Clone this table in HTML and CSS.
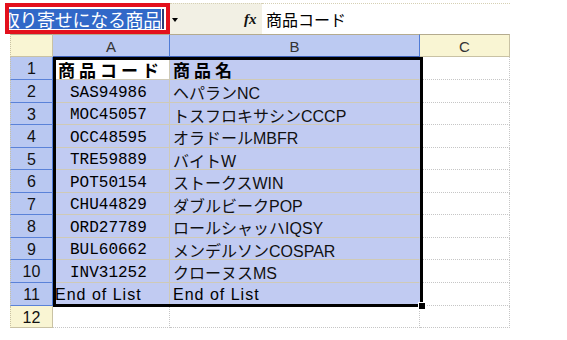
FILE: index.html
```html
<!DOCTYPE html>
<html lang="ja">
<head>
<meta charset="utf-8">
<link rel="stylesheet" href="styles.css">
</head>
<body>
<div class="toolbar">
  <div class="namebox"><span class="nb-text">取り寄せになる商品</span><span class="caret"></span></div>
  <div class="mid">
    <span class="arrow"></span>
    <span class="fx">fx</span>
  </div>
  <div class="formula">商品コード</div>
</div>
<div class="sheet">
  <div class="corner"></div>
  <div class="ch selh">A</div>
  <div class="ch selh">B</div>
  <div class="ch">C</div>

  <div class="rh selr">1</div>
  <div class="cell a active bold">商品コード</div>
  <div class="cell b sel bold">商品名</div>
  <div class="cell c"></div>

  <div class="rh selr">2</div>
  <div class="cell a sel code">SAS94986</div>
  <div class="cell b sel">ヘパランNC</div>
  <div class="cell c"></div>

  <div class="rh selr">3</div>
  <div class="cell a sel code">MOC45057</div>
  <div class="cell b sel">トスフロキサシンCCCP</div>
  <div class="cell c"></div>

  <div class="rh selr">4</div>
  <div class="cell a sel code">OCC48595</div>
  <div class="cell b sel">オラドールMBFR</div>
  <div class="cell c"></div>

  <div class="rh selr">5</div>
  <div class="cell a sel code">TRE59889</div>
  <div class="cell b sel">バイトW</div>
  <div class="cell c"></div>

  <div class="rh selr">6</div>
  <div class="cell a sel code">POT50154</div>
  <div class="cell b sel">ストークスWIN</div>
  <div class="cell c"></div>

  <div class="rh selr">7</div>
  <div class="cell a sel code">CHU44829</div>
  <div class="cell b sel">ダブルビークPOP</div>
  <div class="cell c"></div>

  <div class="rh selr">8</div>
  <div class="cell a sel code">ORD27789</div>
  <div class="cell b sel">ロールシャッハIQSY</div>
  <div class="cell c"></div>

  <div class="rh selr">9</div>
  <div class="cell a sel code">BUL60662</div>
  <div class="cell b sel">メンデルソンCOSPAR</div>
  <div class="cell c"></div>

  <div class="rh selr">10</div>
  <div class="cell a sel code">INV31252</div>
  <div class="cell b sel">クローヌスMS</div>
  <div class="cell c"></div>

  <div class="rh selr">11</div>
  <div class="cell a sel eol">End of List</div>
  <div class="cell b sel eol">End of List</div>
  <div class="cell c"></div>

  <div class="rh">12</div>
  <div class="cell a"></div>
  <div class="cell b"></div>
  <div class="cell c"></div>

  <div class="selection"><span class="handle"></span></div>
</div>
</body>
</html>
```
FILE: styles.css
```css
* { box-sizing: border-box; }
body {
  margin: 0;
  background: #ffffff;
  font-family: "Liberation Sans", "Noto Sans CJK JP", sans-serif;
  width: 567px;
  height: 340px;
  overflow: hidden;
}
.toolbar {
  display: flex;
  width: 510px;
  height: 34px;
}
.namebox {
  margin: 3px 0 0 5px;
  width: 165px;
  height: 31px;
  border: 4px solid #e3101c;
  background: #ffffff;
  display: flex;
  align-items: center;
  justify-content: flex-end;
  overflow: hidden;
  padding: 0 2px 0 0;
}
.nb-text {
  flex: none;
  background: #3168c8;
  color: #ffffff;
  font-family: "Noto Sans CJK JP", sans-serif;
  font-size: 18px;
  line-height: 20px;
  height: 20px;
  white-space: nowrap;
  letter-spacing: -0.3px;
}
.caret {
  flex: none;
  width: 2px;
  height: 20px;
  background: #2a3d78;
  margin-left: 1px;
}
.mid {
  margin-top: 3px;
  width: 92px;
  background: #f2f0e4;
  display: flex;
  align-items: center;
  border-top: 1px dotted #d6d0b4;
  padding-top: 1px;
}
.arrow {
  width: 0;
  height: 0;
  border-left: 3.5px solid transparent;
  border-right: 3.5px solid transparent;
  border-top: 4px solid #000;
  margin-left: 2px;
}
.fx {
  font-family: "Liberation Serif", serif;
  font-style: italic;
  font-weight: bold;
  font-size: 15px;
  margin-left: 66px;
  color: #111;
}
.formula {
  margin-top: 3px;
  flex: 1;
  border-top: 1px dotted #d6d0b4;
  background: #ffffff;
  font-family: "Noto Sans CJK JP", sans-serif;
  font-size: 16px;
  line-height: 30px;
  padding-left: 4px;
  color: #000;
}
.sheet {
  position: relative;
  margin-left: 10px;
  width: 500px;
  display: grid;
  grid-template-columns: 43px 117px 250px 90px;
  grid-template-rows: 23px 23px 23px 22px 23px 22px 23px 22px 23px 22px 23px 23px 22px;
}
.corner, .ch {
  border-top: 1px solid #b4ab8e;
  border-right: 1px solid #c9c2a4;
  border-bottom: 1px solid #c9c2a4;
  background: #f9f5d3;
}
.corner { border-left: 1px dotted #c9c2a4; }
.ch {
  display: flex;
  align-items: center;
  justify-content: center;
  font-size: 15px;
  color: #333;
  padding-top: 1px;
}
.ch.selh {
  background: #bccaf2;
  border-right-color: #4f7bd6;
  border-bottom-color: #3b5fb8;
}
.rh {
  border-left: 1px dotted #c9c2a4;
  border-right: 1px solid #c9c2a4;
  border-bottom: 1px solid #c9c2a4;
  background: #f9f5d3;
  display: flex;
  align-items: center;
  justify-content: center;
  font-size: 16px;
  color: #111;
  padding-top: 2px;
}
.rh.selr {
  background: #b9c8f1;
  border-right: 1px solid #4f7bd6;
  border-bottom: 1px solid #5a82d8;
}
.cell {
  border-right: 1px dotted #c6c6c6;
  border-bottom: 1px dotted #c6c6c6;
  background: #ffffff;
  display: flex;
  align-items: center;
  padding-top: 2px;
  font-size: 16px;
  color: #111;
  white-space: nowrap;
  overflow: hidden;
}
.cell.sel {
  background: #c1cbf2;
  border-right: 1px solid #cfcab6;
  border-bottom: 1px solid #cfcab6;
}
.cell.b { padding-left: 3px; }
.cell.b.sel { border-right-color: #c1cbf2; }
.cell.active {
  background: #ffffff;
  border-right: 1px solid #cfcab6;
  border-bottom: 1px solid #cfcab6;
}
.bold {
  font-family: "Noto Sans CJK JP", sans-serif;
  font-weight: bold;
  font-size: 17px;
  letter-spacing: 4px;
  color: #000;
}
.cell.a.bold { padding-left: 5px; }
.code {
  font-family: "Liberation Mono", monospace;
  font-size: 16px;
  padding-left: 17px;
  padding-top: 3px;
  color: #000;
}
.eol {
  letter-spacing: 1px;
  padding-left: 2px;
  color: #000;
}
.cell.b.eol { padding-left: 3px; }
.selection {
  position: absolute;
  left: 43px;
  top: 23px;
  width: 370px;
  height: 250px;
  border: 3px solid #000;
  pointer-events: none;
}
.handle {
  position: absolute;
  right: -6px;
  bottom: -6px;
  width: 8px;
  height: 8px;
  background: #000;
  border: 1px solid #ffffff;
}
```
